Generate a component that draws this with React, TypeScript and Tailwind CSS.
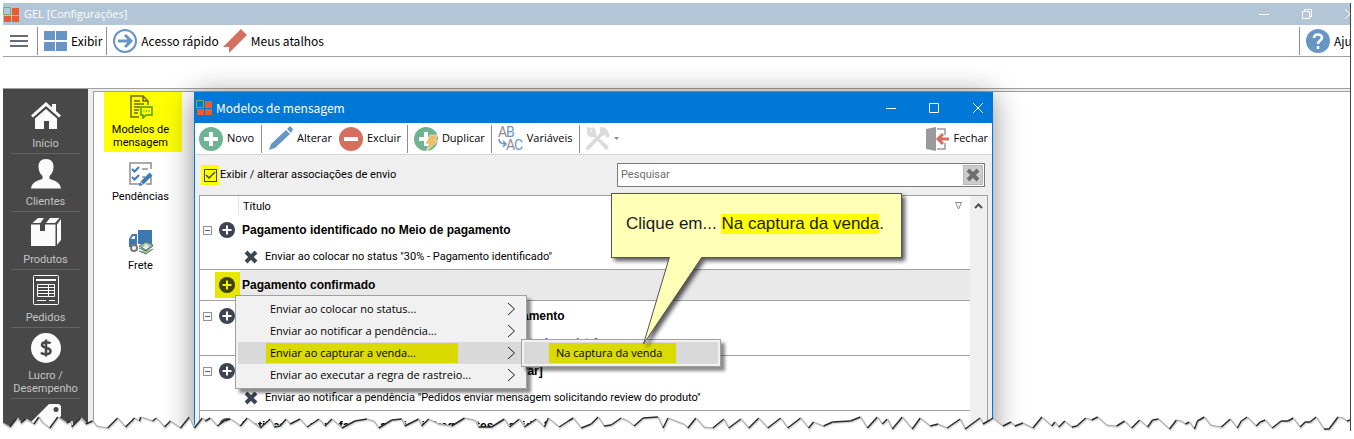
import type { ReactNode } from 'react';

interface NavItem {
    id: string;
    label: string[];
    icon: ReactNode;
}

interface MessageGroup {
    title: string;
    child: string;
}

const TORN_EDGE =
    '0,8 3,10 7,12 14,3 18,8 23,4 31,9 36,2 39,7 47,13 55,2 64,8 68,6 69,12 78,3 83,9 90,6 94,11 105,13 115,3 123,12 132,3 137,6 138,2 145,4 150,6 154,3 162,12 168,6 178,13 187,2 190,9 ' +
    '192,13 200,3 203,6 208,3 215,11 222,6 228,4 233,7 238,11 245,3 258,13 268,4 272,12 278,11 284,4 288,9 298,4 305,12 317,4 323,11 330,4 340,13 353,6 365,4 372,6 377,13 390,5 400,4 403,11 417,4 420,11 427,4 437,9 450,11 463,3 473,5 477,12 490,12 503,4 508,12 518,4 523,12 535,4 ' +
    '543,12 547,3 558,12 567,6 572,3 580,13 590,9 597,2 603,11 610,10 620,3 627,6 633,11 642,3 657,2 662,13 667,3 683,9 687,13 695,3 703,12 712,13 723,4 728,13 740,4 748,13 758,3 767,13 780,3 787,13 800,3 808,13 813,7 823,11 832,7 850,6 860,2 867,13 877,2 882,9 887,4 892,14 902,2 912,14 920,3 930,11 938,9 947,13 960,4 965,14 980,3 983,9 990,5 ' +
    '993,3 1003,11 1011,7 1015,11 1023,8 1033,13 1042,2 1052,11 1055,7 1059,12 1065,6 1072,12 1077,11 1086,3 1092,5 1098,2 1107,10 1117,11 1125,6 1132,13 1140,5 1148,12 1153,5 ' +
    '1159,4 1170,14 1177,5 1182,6 1186,9 1190,7 1195,14 1198,6 1205,2 1211,10 1222,12 1231,4 1238,13 1242,6 1248,2 1257,11 1261,7 1266,5 1273,13 1282,6 1289,6 1294,3 1301,12 1306,7 1311,7 1317,2 1325,14 1330,14 1339,2 1344,3 1348,6 1351,5';

const tornPoints = TORN_EDGE.split(' ').map((point) => point.split(',').map(Number));

const navItems: NavItem[] = [
    {
        id: 'inicio',
        label: ['Início'],
        icon: (
            <svg width="30" height="30" viewBox="0 0 30 30" fill="#fbfbfb">
                <path d="M15 1 0 14.5l2 2L15 5l13 11.500 2-2-5-4.500V3h-4v3.500z" />
                <path d="M4 17.500 15 8l11 9.500V28h-8v-8h-5v8H4z" />
            </svg>
        ),
    },
    {
        id: 'clientes',
        label: ['Clientes'],
        icon: (
            <svg width="30" height="30" viewBox="0 0 30 30" fill="#fbfbfb">
                <path d="M15 0c5 0 7.500 3 7.500 7.500 0 4-1.500 7.500-4 9.500v3c5 1.500 11 3.500 11.500 9.500H0C.5 23.500 6.500 21.500 11.500 20v-3c-2.500-2-4-5.500-4-9.500C7.500 3 10 0 15 0z" />
            </svg>
        ),
    },
    {
        id: 'produtos',
        label: ['Produtos'],
        icon: (
            <svg width="30" height="30" viewBox="0 0 30 30" fill="#fbfbfb">
                <path d="M0 7.500h9V14h5V7.500h10.500V29H0z" />
                <path d="M1.500 6 7 1h6L9.500 6zM15 6l4-5h9.500l-4.500 5zM26 7.500 30 2v21l-4 5z" />
            </svg>
        ),
    },
    {
        id: 'pedidos',
        label: ['Pedidos'],
        icon: (
            <svg width="30" height="30" viewBox="0 0 30 30" fill="none" stroke="#fbfbfb">
                <rect x="2.500" y=".5" width="25" height="29" rx="1" />
                <path d="M5 5h20" strokeWidth="2" />
                <path d="M6.500 9.500h17v12h-17zM6.500 12.500h17M6.500 15.500h17M6.500 18.500h17M17.500 9.500v12" />
                <path d="M6 25.500h9M18 25.500h6" />
            </svg>
        ),
    },
    {
        id: 'lucro',
        label: ['Lucro /', 'Desempenho'],
        icon: (
            <svg width="30" height="30" viewBox="0 0 30 30">
                <circle cx="15" cy="15" r="15" fill="#fbfbfb" />
                <path
                    d="M19.500 10.500C18.500 9 11 8 11 12c0 3.500 8.500 2 8.500 6 0 4.500-8 3.500-9.500 1.500M15 6.500v17"
                    fill="none"
                    stroke="#484848"
                    strokeWidth="2.500"
                />
            </svg>
        ),
    },
];

const groups: MessageGroup[] = [
    { title: 'Aguardando a identificação no novo Meio de pagamento', child: 'Enviar ao notificar a pendência "Aguardando pagamento do produto"' },
    { title: 'Pedido já foi entregue ao cliente [avaliar e comentar]', child: 'Enviar ao notificar a pendência "Pedidos enviar mensagem solicitando review do produto"' },
];

const menuItems = [
    'Enviar ao colocar no status...',
    'Enviar ao notificar a pendência...',
    'Enviar ao capturar a venda...',
    'Enviar ao executar a regra de rastreio...',
];

function AppLogo() {
    return (
        <svg width="17" height="17" viewBox="0 0 17 17" className="shrink-0">
            <path d="M9 2h7v7H9zM1 10h7v6H1zM9 10h7v6H9z" fill="#ea5b2d" />
            <path d="M.5 1.500h7v7h-7z" fill="none" stroke="#7fae62" />
        </svg>
    );
}

function PlusDisc() {
    return (
        <svg width="16" height="16" viewBox="0 0 16 16">
            <circle cx="8" cy="8" r="8" fill="#3d4552" />
            <path d="M8 3.500v9M3.500 8h9" stroke="#fff" strokeWidth="2" />
        </svg>
    );
}

function CrossIcon({ color }: { color: string }) {
    return (
        <svg width="14" height="14" viewBox="0 0 14 14">
            <path d="M2 2l10 10M12 2 2 12" stroke={color} strokeWidth="4" />
        </svg>
    );
}

function ExpandBox() {
    return (
        <button className="w-[9px] h-[9px] border border-[#919191] bg-[#fafafa] flex items-center justify-center" aria-label="Recolher">
            <span className="w-[5px] h-px bg-[#3f5fa8]" />
        </button>
    );
}

function Separator() {
    return <span className="w-px h-[28px] bg-[#8c8c8c] shrink-0" />;
}

function GroupRow({ title, collapsible = true }: { title: string; collapsible?: boolean }) {
    return (
        <div className="h-[30px] flex items-center">
            <span className="w-[15px] flex justify-center">{collapsible && <ExpandBox />}</span>
            <span className="w-[27px] flex pl-1">
                <PlusDisc />
            </span>
            <span className="font-['Liberation_Sans',Arial,sans-serif] text-[12px] font-bold">{title}</span>
        </div>
    );
}

function ChildRow({ text }: { text: string }) {
    return (
        <div className="h-[24px] flex items-center gap-[7px] pl-[44px]">
            <CrossIcon color="#3d4552" />
            <span className="pt-px">{text}</span>
        </div>
    );
}

function Sidebar() {
    return (
        <nav className="w-[85px] shrink-0 bg-[#484848] pt-[7px] px-[8px] text-[#c4c4c4]">
            {navItems.map((item) => (
                <a key={item.id} href={`#${item.id}`} className="flex flex-col items-center pt-[5px] pb-[3px] border-b border-[#636363]">
                    {item.icon}
                    <span className="mt-[6px] text-center leading-[13px]">
                        {item.label.map((line) => (
                            <span key={line} className="block">
                                {line}
                            </span>
                        ))}
                    </span>
                </a>
            ))}
            <a href="#precos" className="flex justify-center pt-[5px] h-[32px] overflow-hidden" aria-label="Preços">
                <svg width="30" height="30" viewBox="0 0 30 30" className="shrink-0">
                    <path d="M18 0h10l2 2v10L12 30 0 18z" fill="#fbfbfb" />
                    <circle cx="25" cy="5.500" r="2.500" fill="#484848" />
                </svg>
            </a>
        </nav>
    );
}

function ShortcutPanel() {
    return (
        <div className="flex-1 border-l border-t border-[#a0a0a0] bg-white pl-[10px] leading-[13px] text-black">
            <a href="#modelos" className="w-[78px] h-[60px] bg-[#ffff00] flex flex-col items-center pt-[3px] pr-[5px]">
                <svg width="24" height="24" viewBox="0 0 24 24" fill="none" stroke="#6b6b00" strokeWidth="1.500">
                    <path d="M10 22H2V1h12l5 5v4M14 1v5h5M5 6h6M5 9h10M5 12h6M5 15h5M5 18h4" />
                    <path d="M12 12h11v8h-6l-3 3v-3h-2z" stroke="#4a9e00" />
                    <path d="M14.500 16h1M17 16h1M19.500 16h1" stroke="#4a9e00" />
                </svg>
                <span className="mt-1 text-center">Modelos de<br />mensagem</span>
            </a>
            <a href="#pendencias" className="w-[73px] flex flex-col items-center mt-[10px]">
                <svg width="26" height="24" viewBox="0 0 26 24" fill="none" strokeWidth="1.500">
                    <path d="M12 22H2V1h21v6M23 14v8h-5M14 7h6M14 15h3" stroke="#8a8f94" />
                    <path d="m4 7 2.500 2.500L11 5M4 15l2.500 2.500L11 13" stroke="#3d7ab8" strokeWidth="2" />
                    <path d="m14 21 9-9" stroke="#3d7ab8" strokeWidth="4" />
                    <path d="m11 24 1-4 3 3z" fill="#3d7ab8" />
                </svg>
                <span className="mt-1">Pendências</span>
            </a>
            <a href="#frete" className="w-[73px] flex flex-col items-center mt-[26px]">
                <svg width="26" height="26" viewBox="0 0 26 26">
                    <path d="M10 1h14v14H10z" fill="#3d77b0" />
                    <path d="M1 18v-8l3-5h5v13z" fill="#3d77b0" />
                    <path d="M3 10l2-3h2v3z" fill="#fff" />
                    <circle cx="6" cy="19" r="3" fill="#fff" stroke="#777" strokeWidth="2" />
                    <path d="m11 17 7-4 7 3-7 5zM11 19l7 3 7-5M11 22l7 3 7-5" fill="#9fc2ab" stroke="#5b7d69" />
                    <circle cx="18" cy="17" r="2" fill="#dcebdd" />
                </svg>
                <span className="mt-1">Frete</span>
            </a>
        </div>
    );
}

function ContextMenu() {
    return (
        <>
            <div className="absolute left-[40px] top-[203px] w-[292px] border border-[#a0a0a0] bg-[#f1f1f1] p-[2px] shadow-[4px_4px_3px_rgba(0,0,0,0.45)] font-['Open_Sans',sans-serif] text-[11px]">
                {menuItems.map((label, i) => (
                    <button key={label} className={`w-full h-[22px] flex items-center justify-between pl-[28px] pr-2 ${i === 2 ? 'bg-[#d9d9d9]' : ''}`}>
                        <span className={i === 2 ? 'bg-[#dada00] w-[192px] h-[20px] flex items-center pl-1' : 'pl-1'}>{label}</span>
                        <svg width="9" height="14" viewBox="0 0 9 14" fill="none" stroke="#1a1a1a">
                            <path d="M1 1l6.500 6L1 13" />
                        </svg>
                    </button>
                ))}
            </div>
            <div className="absolute left-[326px] top-[247px] w-[200px] border border-[#a0a0a0] bg-[#f1f1f1] p-[2px] shadow-[4px_4px_3px_rgba(0,0,0,0.45)] font-['Open_Sans',sans-serif] text-[11px]">
                <button className="w-full h-[22px] bg-[#d9d9d9] flex items-center pl-[25px]">
                    <span className="bg-[#dada00] w-[127px] h-[20px] flex items-center pl-[7px]">Na captura da venda</span>
                </button>
            </div>
        </>
    );
}

function Callout() {
    return (
        <div className="absolute left-[416px] top-[101px] w-[291px] drop-shadow-[3px_3px_2px_rgba(0,0,0,0.65)]">
            <p className="h-[65px] border border-[#555555] bg-[#ffffb8] pl-[14px] pb-[4px] flex items-center font-['Liberation_Sans',Arial,sans-serif] text-[17px] text-[#1c1c1c] whitespace-pre">
                Clique em... <mark className="bg-[#ffff00] text-inherit leading-[20px]">Na captura da venda</mark>.
            </p>
            <svg width="80" height="90" viewBox="0 0 80 90" className="absolute left-[20px] top-[64px]">
                <path d="M38.500 0 12.500 87 71 0z" fill="#ffffb8" />
                <path d="M38.500 0 12.500 87 71 0" fill="none" stroke="#555" />
            </svg>
        </div>
    );
}

function ModelosDialog() {
    return (
        <div className="absolute left-[191px] top-[89px] w-[799px] border-x border-[#0078d7] bg-[#efefef] shadow-[0_4px_28px_rgba(0,0,0,0.45)]">
            <div className="h-[31px] bg-[#0078d7] flex items-center pl-px text-white font-['Noto_Sans_CJK_SC',sans-serif] text-[12px]">
                <AppLogo />
                <span className="ml-[3px] flex-1">Modelos de mensagem</span>
                <svg width="102" height="12" viewBox="0 0 102 12" className="mr-1" fill="none" stroke="#fff">
                    <path d="M0 6.500h10M43.500 1.500h9v9h-9zM87 1l10 10M97 1 87 11" />
                </svg>
            </div>

            <div className="h-[32px] bg-white border-b border-[#d5d5d5] flex items-center pl-1 pr-1 font-['Open_Sans',sans-serif] text-[11px]">
                <button className="flex items-center gap-1">
                    <svg width="24" height="24" viewBox="0 0 24 24">
                        <circle cx="12" cy="12" r="12" fill="#6fb392" />
                        <path d="M12 5v14M5 12h14" stroke="#fff" strokeWidth="4" />
                    </svg>
                    Novo
                </button>
                <span className="w-[7px]" />
                <Separator />
                <button className="flex items-center gap-[3px] ml-[6px]">
                    <svg width="26" height="25" viewBox="0 0 26 25" fill="#6896c4">
                        <path d="M1 24l2-6L18 4l4 4L7 22zM19 3 22 0l3 3-2 4z" />
                    </svg>
                    Alterar
                </button>
                <button className="flex items-center gap-1 ml-[7px]">
                    <svg width="24" height="24" viewBox="0 0 24 24">
                        <circle cx="12" cy="12" r="12" fill="#d56f5f" />
                        <path d="M5 12h14" stroke="#fff" strokeWidth="4" />
                    </svg>
                    Excluir
                </button>
                <span className="w-[6px]" />
                <Separator />
                <button className="flex items-center gap-[3px] ml-[6px]">
                    <svg width="25" height="24" viewBox="0 0 25 24">
                        <circle cx="12" cy="12" r="12" fill="#6fb392" />
                        <path d="M12 5v14M5 12h14" stroke="#fff" strokeWidth="4" />
                        <path d="M16 8h8l-3 5h4L12 25l3-8h-4z" fill="#f0bd6c" stroke="#fff" strokeWidth=".5" />
                    </svg>
                    Duplicar
                </button>
                <span className="w-[6px]" />
                <Separator />
                <button className="flex items-center gap-1 ml-[6px]">
                    <svg width="25" height="25" viewBox="0 0 25 25" fontFamily="Roboto, sans-serif" fontSize="14">
                        <text x="0" y="11" fill="#8c8c8c">A</text>
                        <text x="8" y="11" fill="#6896c4">B</text>
                        <text x="8" y="24" fill="#8c8c8c">A</text>
                        <text x="16" y="24" fill="#6896c4">C</text>
                        <path d="M1 13c0 4 3 5 7 5M5 15l3 3-3 3" fill="none" stroke="#6896c4" strokeWidth="1.500" />
                    </svg>
                    Variáveis
                </button>
                <span className="w-[6px]" />
                <Separator />
                <button className="flex items-center gap-1 ml-[6px]" aria-label="Ferramentas">
                    <svg width="24" height="24" viewBox="0 0 24 24" fill="#dcdcdc">
                        <path d="M6 1 1 0v5c0 4 3 6 7 5l11 12c1 2 5-1 3-3L10 8c1-4-1-7-4-8v4L4 6z" />
                        <path d="M14 0c4 0 6 1 8 4l2 5-3 2-2-3-3 1L3 23c-2 1-4-1-3-3L14 6z" />
                    </svg>
                    <svg width="5" height="3" viewBox="0 0 5 3">
                        <path d="M0 0h5L2.500 3z" fill="#8c8c8c" />
                    </svg>
                </button>
                <button className="flex items-center gap-1 ml-auto">
                    <svg width="24" height="24" viewBox="0 0 24 24">
                        <path d="M0 2 10 0v24L0 22z" fill="#9a9a9a" />
                        <path d="M11 2h8v6M19 16v6h-8" fill="none" stroke="#9a9a9a" strokeWidth="1.500" />
                        <path d="M23 12H12M17 7l-5 5 5 5" fill="none" stroke="#d56f5f" strokeWidth="3" />
                    </svg>
                    Fechar
                </button>
            </div>

            <div className="h-[40px] flex items-center pl-[6px] pr-[7px]">
                <label className="flex items-center flex-1">
                    <span className="relative w-[18px] h-[20px] bg-[#ffff00] flex items-center justify-center mr-px">
                        <input type="checkbox" defaultChecked className="appearance-none w-[13px] h-[13px] border border-[#4a4a00]" />
                        <svg width="11" height="9" viewBox="0 0 11 9" className="absolute pointer-events-none" fill="none" stroke="#4a4a00" strokeWidth="1.500">
                            <path d="M1 4l3 3 6-6" />
                        </svg>
                    </span>
                    <span className="pt-px">Exibir / alterar associações de envio</span>
                </label>
                <div className="w-[368px] h-[24px] border border-[#7a7a7a] bg-white flex items-center pr-px">
                    <input type="text" placeholder="Pesquisar" aria-label="Pesquisar" className="flex-1 pl-[3px] outline-none placeholder:text-[#6d6d6d]" />
                    <button className="w-[20px] h-[20px] bg-[#cccccc] border border-[#b8b8b8] flex items-center justify-center" aria-label="Limpar">
                        <CrossIcon color="#6e6e6e" />
                    </button>
                </div>
            </div>

            <div className="mx-1 border border-[#a0a0a0] bg-white flex">
                <div className="flex-1">
                    <div className="h-[19px] flex items-center">
                        <span className="w-[39px] h-full border-r border-[#e2e2e2]" />
                        <span className="pl-1 pt-[3px] flex-1">Título</span>
                        <svg width="8" height="8" viewBox="0 0 8 8" className="mr-[7px]" fill="none" stroke="#8a8a8a">
                            <path d="M.5.500h6L3.500 7z" />
                        </svg>
                    </div>
                    <div className="border-b border-[#a0a0a0]">
                        <GroupRow title="Pagamento identificado no Meio de pagamento" />
                        <ChildRow text={'Enviar ao colocar no status "30% - Pagamento identificado"'} />
                    </div>
                    <div className="h-[31px] flex items-center border-b border-[#a0a0a0] pl-[15px]">
                        <span className="w-[25px] h-[26px] bg-[#e6e600] flex items-center pl-1">
                            <svg width="16" height="16" viewBox="0 0 16 16">
                                <circle cx="8" cy="8" r="8" fill="#3d4200" />
                                <path d="M8 3.500v9M3.500 8h9" stroke="#f0f000" strokeWidth="2" />
                            </svg>
                        </span>
                        <span className="flex-1 h-full bg-[#e9e9e9] flex items-center pl-[2px] font-['Liberation_Sans',Arial,sans-serif] text-[12px] font-bold">
                            Pagamento confirmado
                        </span>
                    </div>
                    {groups.map((group) => (
                        <div key={group.title} className="border-b border-[#a0a0a0]">
                            <GroupRow title={group.title} />
                            <ChildRow text={group.child} />
                        </div>
                    ))}
                    <GroupRow title="Notificação para família avaliar infrequentes (pedido 2)" collapsible={false} />
                </div>
                <div className="w-[17px] bg-[#efefef] flex justify-center pt-[7px]">
                    <svg width="9" height="6" viewBox="0 0 9 6" fill="none" stroke="#505050" strokeWidth="2">
                        <path d="M1 5l3.500-3.500L8 5" />
                    </svg>
                </div>
            </div>

            <ContextMenu />
            <Callout />
        </div>
    );
}

// Rising flanks are dark and falling ones pale, like paper lit from one side
function TornEdge() {
    return (
        <svg viewBox="0 0 1351 16" preserveAspectRatio="none" className="absolute left-0 bottom-0 w-full h-[16px]">
            <polygon points={`0,16 ${TORN_EDGE} 1351,16`} fill="#fff" />
            <polyline points={TORN_EDGE} fill="none" stroke="#d8d8d8" strokeWidth="2" transform="translate(1 1)" />
            {tornPoints.slice(1).map(([x, y], i) => {
                const [prevX, prevY] = tornPoints[i];
                return <line key={x} x1={prevX} y1={prevY} x2={x} y2={y} stroke={y > prevY ? '#a8a8a8' : '#2a2a2a'} strokeWidth={y > prevY ? 1 : 1.5} />;
            })}
        </svg>
    );
}

export default function App() {
    return (
        <div className="bg-white pt-[3px] px-[3px] font-['Roboto',sans-serif] text-[11px] text-black">
            <div className="relative overflow-hidden border-r border-[#444444]">
                <header>
                    <div className="h-[22px] bg-[#b2c6d8] flex items-center text-white font-['Open_Sans',sans-serif] text-[11px]">
                        <AppLogo />
                        <span className="ml-1 flex-1">GEL [Configurações]</span>
                        <svg width="91" height="12" viewBox="0 0 91 12" fill="none" stroke="#fff">
                            <path d="M0 6.500h10M43.500 3.500h7v7h-7zM45.500 3.500v-2h7v7h-2M86 1l10 10M96 1 86 11" />
                        </svg>
                    </div>
                    <div className="h-[32px] border-b border-[#a0a0a0] flex items-center pl-[7px] font-['Noto_Sans_CJK_SC',sans-serif] text-[12px]">
                        <button aria-label="Menu">
                            <svg width="18" height="12" viewBox="0 0 18 12" stroke="#666b7a" strokeWidth="2">
                                <path d="M0 1h18M0 6h18M0 11h18" />
                            </svg>
                        </button>
                        <span className="w-[9px]" />
                        <Separator />
                        <button className="flex items-center gap-1 ml-[6px]">
                            <svg width="23" height="20" viewBox="0 0 23 20" fill="#6896c4">
                                <path d="M0 0h11v9H0zM12 0h11v9H12zM0 11h11v9H0zM12 11h11v9H12z" />
                            </svg>
                            Exibir
                        </button>
                        <span className="w-1" />
                        <Separator />
                        <button className="flex items-center gap-1 ml-[6px]">
                            <svg width="24" height="24" viewBox="0 0 24 24" fill="none" stroke="#6896c4">
                                <circle cx="12" cy="12" r="11" strokeWidth="2" />
                                <path d="M5 12h13M12 6l6 6-6 6" strokeWidth="3" />
                            </svg>
                            Acesso rápido
                        </button>
                        <button className="flex items-center gap-1 ml-1">
                            <svg width="24" height="24" viewBox="0 0 24 24" fill="#d56f5f">
                                <path d="M18 0 24 6 6 24v-6H0z" />
                            </svg>
                            Meus atalhos
                        </button>
                        <div className="ml-auto w-[51px] flex items-center overflow-hidden">
                            <Separator />
                            <button className="flex items-center gap-1 ml-[6px]">
                                <svg width="24" height="24" viewBox="0 0 24 24" className="shrink-0">
                                    <circle cx="12" cy="12" r="12" fill="#6896c4" />
                                    <path d="M8 9c0-5 8-4.500 8-.5 0 3-4 3-4 6.500M12 17v3" fill="none" stroke="#fff" strokeWidth="2.500" />
                                </svg>
                                Ajuda
                            </button>
                        </div>
                    </div>
                    <div className="h-[32px] border-b border-[#a0a0a0]" />
                </header>

                <main className="flex bg-[#ededed]">
                    <Sidebar />
                    <div className="flex-1 flex pt-[2px] pl-[5px]">
                        <ShortcutPanel />
                    </div>
                </main>

                <ModelosDialog />

                <TornEdge />
            </div>
        </div>
    );
}
